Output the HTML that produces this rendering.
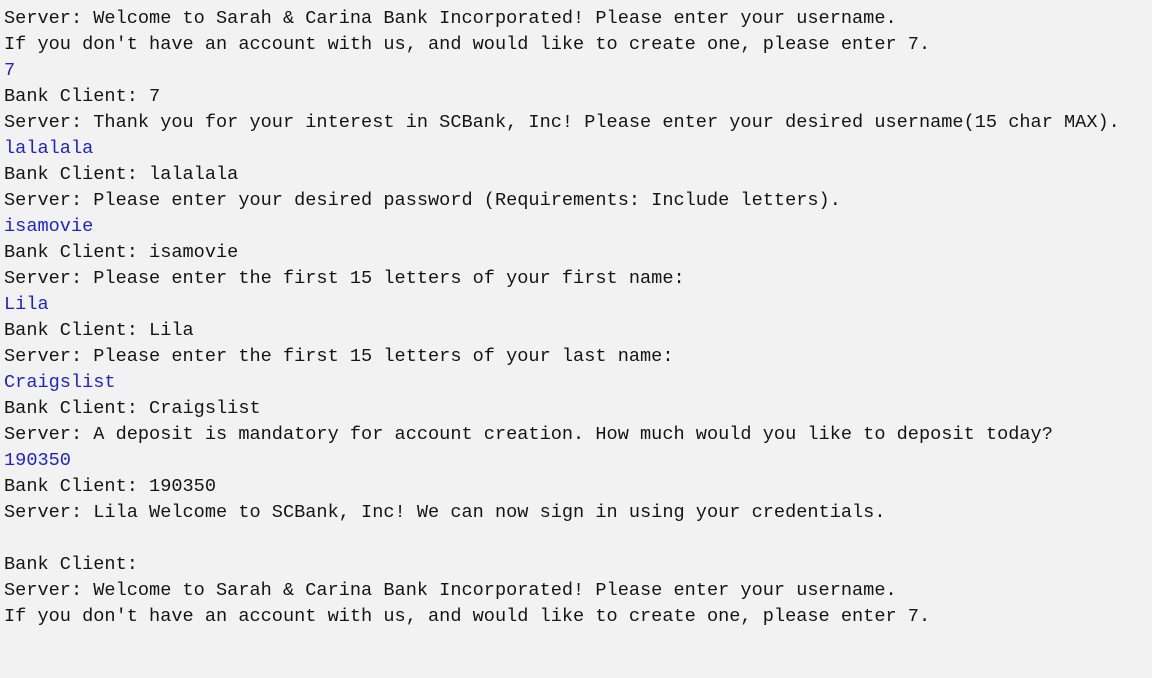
<!DOCTYPE html>
<html><head><style>
html,body{margin:0;padding:0;background:#f2f2f2;width:1152px;height:678px;overflow:hidden}
pre{margin:0;padding:6px 0 0 4px;font-family:"Liberation Mono",monospace;font-size:18.6px;line-height:26px;color:#141414}
.b{color:#2222c8}
</style></head><body><pre>Server: Welcome to Sarah &amp; Carina Bank Incorporated! Please enter your username.
If you don't have an account with us, and would like to create one, please enter 7.
<span class="b">7</span>
Bank Client: 7
Server: Thank you for your interest in SCBank, Inc! Please enter your desired username(15 char MAX).
<span class="b">lalalala</span>
Bank Client: lalalala
Server: Please enter your desired password (Requirements: Include letters).
<span class="b">isamovie</span>
Bank Client: isamovie
Server: Please enter the first 15 letters of your first name:
<span class="b">Lila</span>
Bank Client: Lila
Server: Please enter the first 15 letters of your last name:
<span class="b">Craigslist</span>
Bank Client: Craigslist
Server: A deposit is mandatory for account creation. How much would you like to deposit today?
<span class="b">190350</span>
Bank Client: 190350
Server: Lila Welcome to SCBank, Inc! We can now sign in using your credentials.

Bank Client: 
Server: Welcome to Sarah &amp; Carina Bank Incorporated! Please enter your username.
If you don't have an account with us, and would like to create one, please enter 7.
</pre></body></html>
